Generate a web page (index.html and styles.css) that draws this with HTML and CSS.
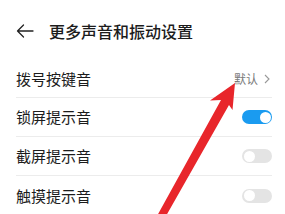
FILE: index.html
```html
<!DOCTYPE html>
<html lang="zh">
<head>
<meta charset="utf-8">
<link rel="stylesheet" href="styles.css">
</head>
<body>
<div class="screen">
  <header class="header">
    <svg class="back" width="18" height="14" viewBox="0 0 18 14">
      <path d="M17 7H1.5M7.5 1L1.5 7L7.5 13" fill="none" stroke="#222" stroke-width="1.3" stroke-linecap="round" stroke-linejoin="round"/>
    </svg>
    <h1 class="title">更多声音和振动设置</h1>
  </header>
  <ul class="list">
    <li class="row">
      <span class="label">拨号按键音</span>
      <span class="value">默认<svg class="chev" width="6" height="10" viewBox="0 0 6 10"><path d="M1 1L5 5L1 9" fill="none" stroke="#999" stroke-width="1.1"/></svg></span>
    </li>
    <li class="row">
      <span class="label">锁屏提示音</span>
      <span class="toggle on"><span class="knob"></span></span>
    </li>
    <li class="row">
      <span class="label">截屏提示音</span>
      <span class="toggle"><span class="knob"></span></span>
    </li>
    <li class="row last">
      <span class="label">触摸提示音</span>
      <span class="toggle"><span class="knob"></span></span>
    </li>
  </ul>
  <svg class="arrow" width="285" height="214" viewBox="0 0 285 214">
    <polygon points="235,83 232.5,110 229,105 166,216 157,216 221,100 210,100.5" fill="#e8262b"/>
  </svg>
</div>
</body>
</html>
```
FILE: styles.css
```css
* { box-sizing: border-box; }
html, body { margin: 0; padding: 0; background: #fff; }
body { font-family: "Noto Sans CJK SC", "Noto Sans", sans-serif; color: #1c1c1c; }
.screen { position: relative; width: 285px; height: 214px; overflow: hidden; }
.header { height: 60px; display: flex; align-items: center; padding-left: 16px; padding-top: 1px; }
.back { display: block; margin-right: 15px; }
.title { margin: 0; font-size: 16px; font-weight: 500; line-height: 20px; letter-spacing: 0; }
.list { list-style: none; margin: 0 13px 0 16px; padding: 0; }
.row { height: 39px; display: flex; align-items: center; justify-content: space-between; border-bottom: 1px solid #ececec; font-size: 15px; }
.row:first-child { height: 38px; }
.row.last { border-bottom: none; }
.label { line-height: 20px; }
.value { display: flex; align-items: center; font-size: 12px; color: #7a7a7a; gap: 6px; margin-right: 2px; }
.chev { display: block; }
.toggle { position: relative; width: 30px; height: 14px; border-radius: 7px; background: #e4e4e4; }
.toggle.on { background: #1a9bf0; }
.knob { position: absolute; top: 1.5px; left: 1.5px; width: 11px; height: 11px; border-radius: 50%; background: #fff; }
.toggle.on .knob { left: auto; right: 1.5px; }
.arrow { position: absolute; left: 0; top: 0; pointer-events: none; }
```
